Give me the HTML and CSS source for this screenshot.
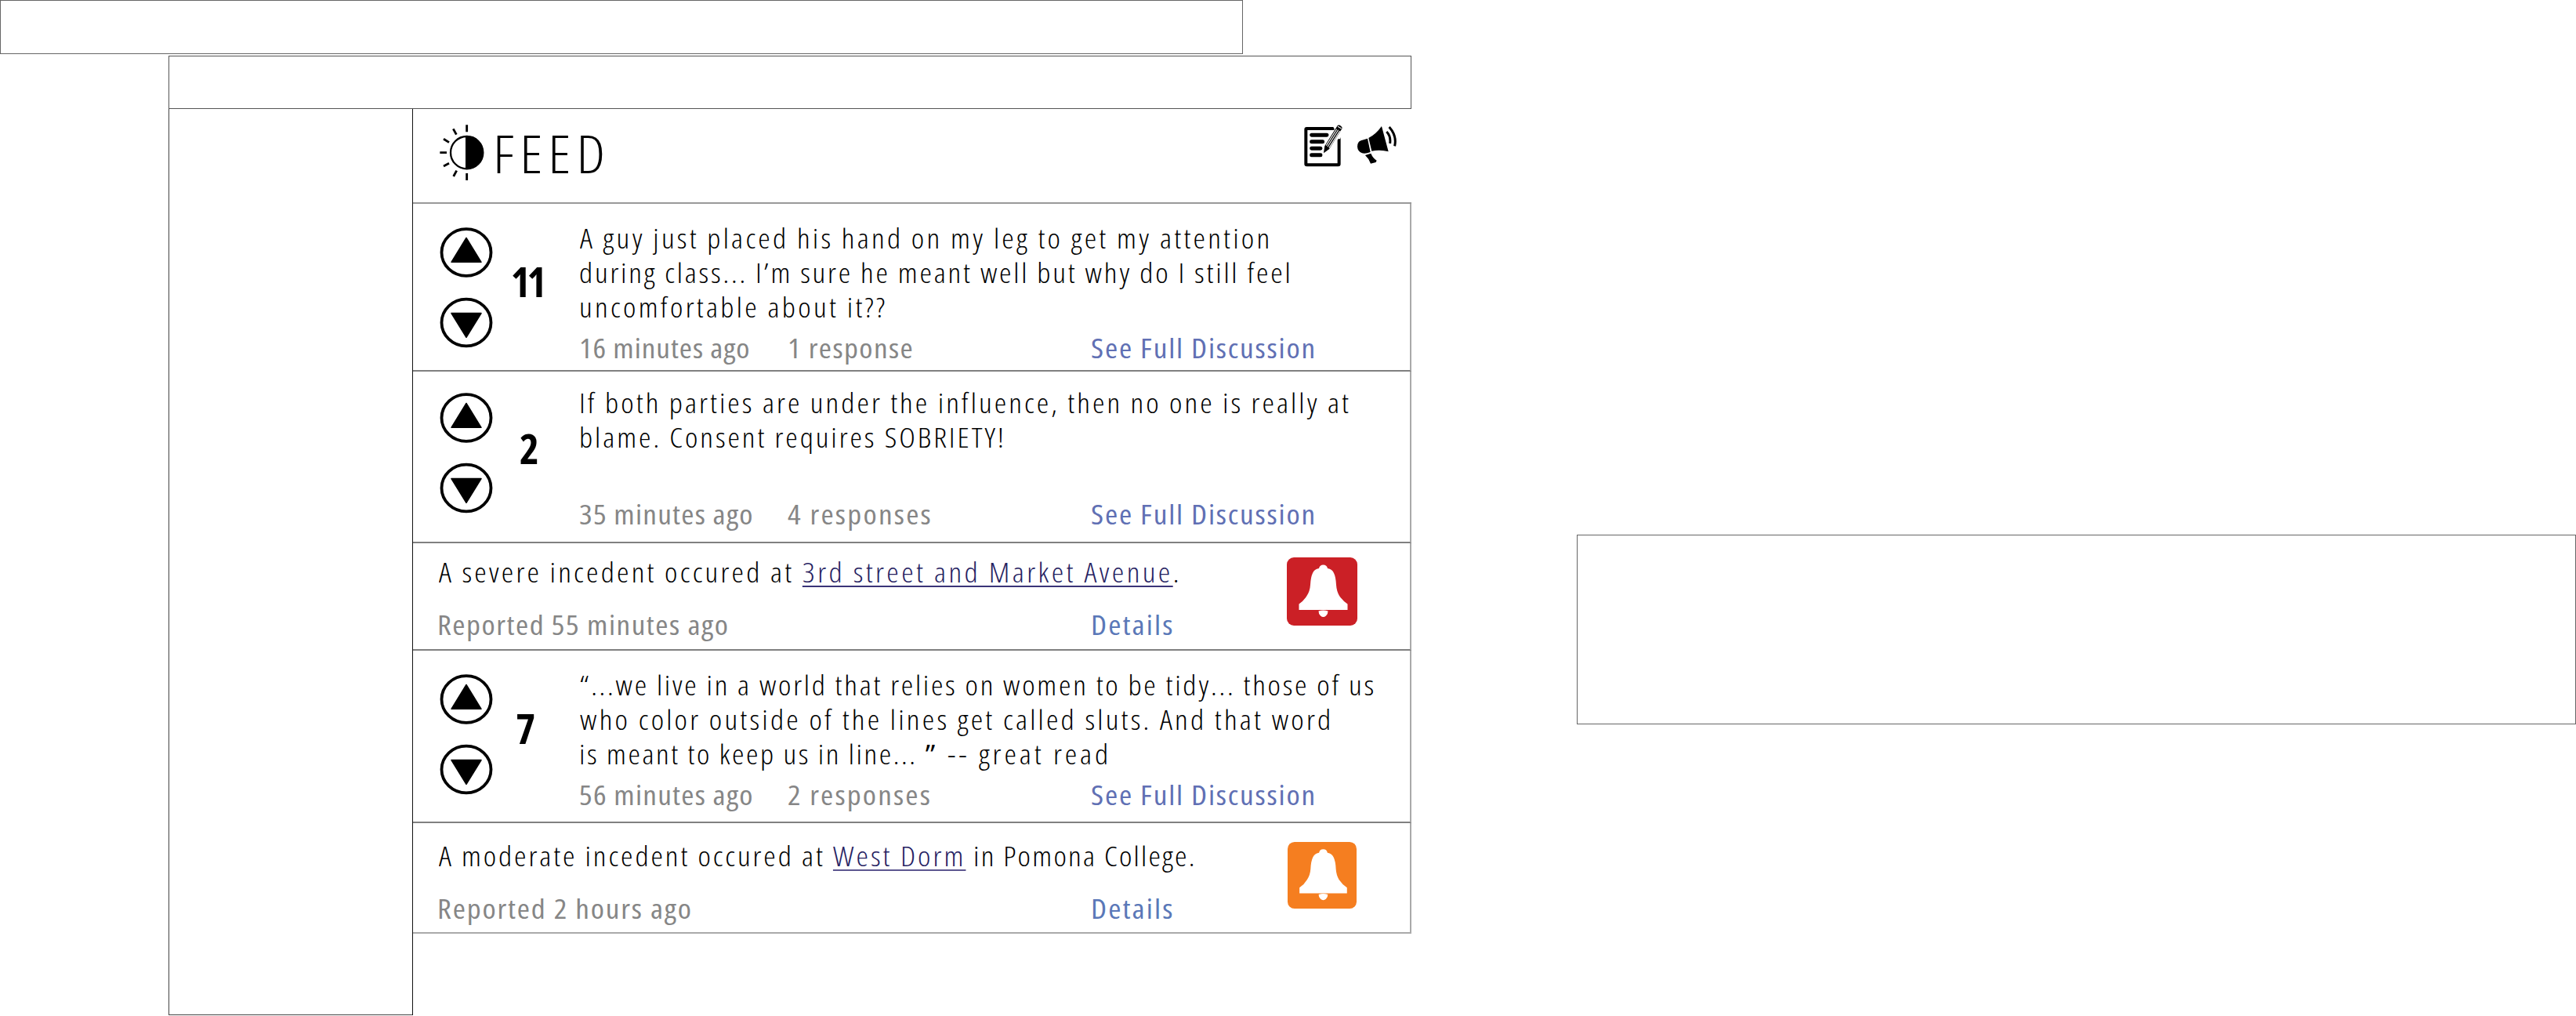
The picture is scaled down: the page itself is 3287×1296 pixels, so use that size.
FILE: index.html
```html
<!DOCTYPE html>
<html lang="en">
<head>
<meta charset="utf-8">
<title>Feed</title>
<link rel="stylesheet" href="styles.css">
</head>
<body>
<svg class="defs" aria-hidden="true">
  <symbol id="votes" viewBox="0 0 68 154">
    <g fill="none" stroke="#000" stroke-width="3.800">
      <ellipse cx="34" cy="32" rx="31.500" ry="29.900"/>
      <ellipse cx="34" cy="121.500" rx="31.500" ry="29.900"/>
    </g>
    <path d="M34 13.500L53 44.300H15zM15 109.500H53L34 140.300z" stroke="#000" stroke-width="1.500" stroke-linejoin="round"/>
  </symbol>
  <symbol id="bell" viewBox="0 0 90 87">
    <rect width="90" height="87" rx="9" fill="currentColor"/>
    <path d="M46.500 9.500q4.500 0 5.500 4.500 6 1 8 6 2.500 5 3 15 .5 8 4 14 4 6 10.500 10.500v7.500h-62v-7.500q6.500-4.500 10-10.500 4-6 4.500-14 .5-10 3-15 2-5 8-6 1-4.500 5.500-4.500zM40.500 68.500q6-2 12 0 0 4-2.500 6-3.500 3-7 0-2.500-2-2.500-6z" fill="#fff"/>
  </symbol>
</svg>
<div class="page">
  <div class="app">
    <div class="bar"></div>
    <div class="window">
      <div class="bar"></div>
      <div class="columns">
        <aside class="sidebar"></aside>
        <main class="feed">
          <header class="feed-header">
            <svg class="sun" viewBox="120 80 180 220"><circle cx="227" cy="193" r="62" fill="none" stroke="#000" stroke-width="7"/><path d="M222 130h5a63 63 0 0 1 0 126h-5z"/><path d="M227 87v27M227 272v27M124 193h26M175 102l12 22M138 141l21 13M138 245l21-11M176 284l12-22" stroke="#000" stroke-width="8.500"/></svg>
            <h1>FEED</h1>
            <svg class="note" viewBox="130 84 160 166"><rect x="140" y="102" width="127" height="139" rx="3" fill="none" stroke="#000" stroke-width="12"/><path d="M243 92L281 84V120L271 142H258V120z" fill="#fff"/><path d="M162 127h58M162 152h42M162 178h34M162 203h34" stroke="#000" stroke-width="15" stroke-linecap="round"/><path d="M257 93L207 170v30l27-14 50-76z" fill="#fff"/><path d="M261 91q5-5 13 1t3 12L229 181 208 196 212 169z"/><path d="M258 104L218 167M264 107L223 172M270 111L229 176M262 94l14 8" stroke="#fff" stroke-width="3.200" fill="none"/></svg>
            <svg class="horn" viewBox="330 88 160 152"><path d="M375 141L386 193Q368 200 354 197 337 191 336 172 336 154 350 149zM379 139Q407 125 429 94L455 191Q424 182 391 189zM366 205L388 198Q396 217 410 225L407 232 387 237Q381 219 366 205z"/><path d="M448 115Q465 132 461 160M458 97Q488 130 479 170" fill="none" stroke="#000" stroke-width="9"/></svg>
          </header>

          <article class="post post-1">
            <svg class="votes"><use href="#votes"/></svg>
            <div class="score">11</div>
            <div class="content">
              <div class="text">
                <p class="l1">A guy just placed his hand on my leg to get my attention</p>
                <p class="l2">during class... I’m sure he meant well but why do I still feel</p>
                <p class="l3">uncomfortable about it??</p>
              </div>
              <div class="meta"><span class="time">16 minutes ago</span><span class="count">1 response</span><a class="more">See Full Discussion</a></div>
            </div>
          </article>

          <article class="post post-2">
            <svg class="votes"><use href="#votes"/></svg>
            <div class="score">2</div>
            <div class="content">
              <div class="text">
                <p class="l1">If both parties are under the influence, then no one is really at</p>
                <p class="l2">blame. Consent requires SOBRIETY!</p>
              </div>
              <div class="meta"><span class="time">35 minutes ago</span><span class="count">4 responses</span><a class="more">See Full Discussion</a></div>
            </div>
          </article>

          <article class="alert severe">
            <div class="content">
              <p><span class="lead">A severe incedent occured at </span><a class="place">3rd street and Market Avenue</a>.</p>
              <div class="meta"><span class="time">Reported 55 minutes ago</span><a class="details">Details</a></div>
            </div>
            <svg class="bell"><use href="#bell"/></svg>
          </article>

          <article class="post post-3">
            <svg class="votes"><use href="#votes"/></svg>
            <div class="score">7</div>
            <div class="content">
              <div class="text">
                <p class="l1">“...we live in a world that relies on women to be tidy... those of us</p>
                <p class="l2">who color outside of the lines get called sluts. And that word</p>
                <p class="l3"><span class="quote">is meant to keep us in line... </span><b>”</b> -- great read</p>
              </div>
              <div class="meta"><span class="time">56 minutes ago</span><span class="count">2 responses</span><a class="more">See Full Discussion</a></div>
            </div>
          </article>

          <article class="alert moderate">
            <div class="content">
              <p><span class="lead">A moderate incedent occured at </span><a class="place">West Dorm</a><span class="tail"> in Pomona College.</span></p>
              <div class="meta"><span class="time">Reported 2 hours ago</span><a class="details">Details</a></div>
            </div>
            <svg class="bell"><use href="#bell"/></svg>
          </article>
        </main>
      </div>
    </div>
  </div>
  <div class="panel"></div>
</div>
</body>
</html>
```
FILE: styles.css
```css
* { box-sizing: border-box; }

body {
  margin: 0;
  background: #fff;
  color: #000;
  font: 300 35px/44.3px "Open Sans", sans-serif;
  font-stretch: 75%;
  overflow: hidden;
}

svg { display: block; flex: none; }
.defs { width: 0; height: 0; position: absolute; }
h1, p { margin: 0; }

.page { display: flex; align-items: flex-start; height: 1296px; }
.app { width: 1801px; flex: none; }
.bar { width: 1586px; height: 69px; border: 1px solid #666; }
.window { margin: 2px 0 0 215px; }
.window > .bar { height: 68px; border-color: #555; }
.columns { display: flex; align-items: flex-start; }
.sidebar { width: 311px; height: 1156px; border: 1px solid #444; border-top: 0; border-right: 0; flex: none; }
.panel { width: 1275px; height: 242px; margin: 682px 0 0 211px; border: 1px solid #666; flex: none; }

/* Feed column */
.feed { width: 1275px; height: 1156px; border-left: 1px solid #111; }
.feed-header {
  display: flex;
  align-items: flex-start;
  height: 121px;
  padding: 0 18px 0 33px;
  border-bottom: 2px solid #999;
}
.sun { width: 60px; height: 73.3px; margin-top: 17.7px; }
h1 {
  margin: 10.6px auto 0 9.4px;
  font-size: 67px;
  line-height: 90px;
  font-weight: 300;
  letter-spacing: 6.2px;
  transform: scaleX(1.12);
  transform-origin: 0 0;
}
.note { width: 53.3px; height: 55.3px; margin-top: 19px; }
.horn { width: 53.3px; height: 50.7px; margin: 20.3px 0 0 13.4px; }

.post, .alert {
  display: flex;
  align-items: flex-start;
  border-right: 2px solid #aaa;
  border-bottom: 2px solid #808080;
}
.post { padding-left: 34.3px; }
.post-1 { height: 214px; }
.post-2 { height: 219px; }
.post-3 { height: 220px; }
.severe { height: 137px; }
.moderate { height: 141px; border-bottom-color: #aaa; }

.votes { width: 68px; height: 154px; margin-top: 29.6px; }
.post-2 .votes { margin-top: 27.2px; }

.score {
  width: 109.7px;
  flex: none;
  padding: 69.4px 0 0 33.6px;
  font-size: 53px;
  line-height: 60px;
  font-weight: 700;
}
.post-1 .score { padding-left: 22.4px; letter-spacing: -4px; }
.post-2 .score { padding-top: 67.6px; }
.post-3 .score { padding-left: 29px; }

.content { display: flex; flex-direction: column; justify-content: space-between; height: 100%; }
.post .content { padding: 21.8px 0 5.9px; }
.post-2 .content { padding: 17.8px 0 12.9px; }
.post-3 .content { padding: 21.8px 0 11.9px; }
.alert .content { width: 1115.3px; flex: none; padding: 14.8px 0 8.9px 30.5px; }
.moderate .content { padding: 19.8px 0 7.9px 30.5px; }

/* Letterforms are slightly extended horizontally */
p, .meta > * {
  white-space: nowrap;
  transform: scaleX(1.12);
  transform-origin: 0 0;
}
.alert p { margin-left: 2px; }

.post-1 .l1 { letter-spacing: 2.86px; margin-left: 1px; }
.post-1 .l2 { letter-spacing: 2.47px; }
.post-1 .l3 { letter-spacing: 2.91px; }
.post-2 .l1 { letter-spacing: 2.7px; }
.post-2 .l2 { letter-spacing: 2.6px; }
.post-3 .l1 { letter-spacing: 2.42px; margin-left: 1px; }
.post-3 .l2 { letter-spacing: 2.85px; margin-left: 1px; }
.post-3 .l3 { letter-spacing: 3.5px; }
.post-3 .quote { letter-spacing: 2.25px; }
.post-3 b { font-weight: 500; }

.lead { letter-spacing: 2.83px; }
.moderate .lead { letter-spacing: 2.57px; }
.tail { letter-spacing: 2px; }
.place {
  letter-spacing: 3.02px;
  color: #262262;
  text-decoration: underline 2px #3a3478;
  text-decoration-skip-ink: none;
  text-underline-offset: 4px;
}
.moderate .place { letter-spacing: 2.71px; text-decoration-color: #5c5690; }

/* Age, replies and link below each entry */
.meta { display: grid; font-weight: 500; color: #868686; }
.post .meta { grid-template-columns: 266.5px 387px auto; }
.alert .meta { grid-template-columns: 834.5px auto; }
.meta > * { letter-spacing: 1.1px; }
.meta .more { letter-spacing: 1.63px; color: #6070b4; }
.meta .details { letter-spacing: 1.9px; color: #5a78b8; }
.post-1 .time { letter-spacing: 0.82px; }
.post-1 .count { letter-spacing: 1.23px; }
.post-2 .count { letter-spacing: 1.99px; }
.post-3 .count { letter-spacing: 1.91px; }
.severe .time { letter-spacing: 1.34px; }
.moderate .time { letter-spacing: 1.62px; }

.bell { width: 90px; height: 87px; margin-top: 18px; color: #cb2026; }
.moderate .bell { width: 88px; margin: 23px 0 0 1px; color: #f57e20; }
```
